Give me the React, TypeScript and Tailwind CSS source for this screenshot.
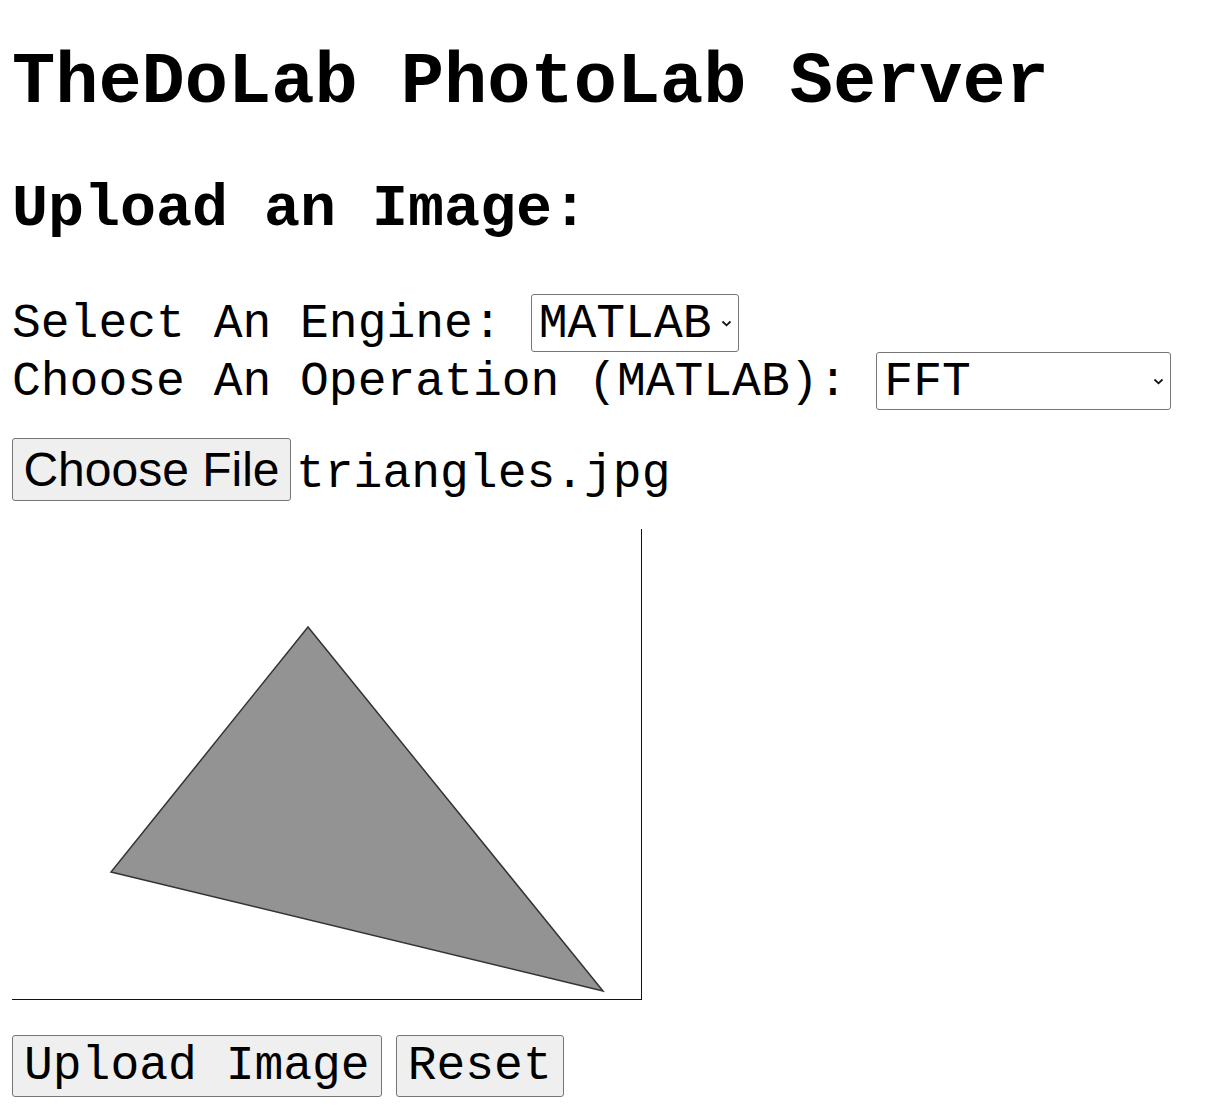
import React from "react";

function Chevron() {
  return (
    <svg width="11" height="7" viewBox="0 0 11 7" className="shrink-0">
      <path d="M1.5 1.5 L5.5 5.3 L9.5 1.5" fill="none" stroke="#111" strokeWidth="1.8" />
    </svg>
  );
}

function FakeSelect({ value, width }: { value: string; width: string }) {
  return (
    <div
      className={`${width} h-[58px] ml-[29px] flex items-center justify-between border border-[#767676] rounded-[3px] bg-white pl-[7px] pr-[6px]`}
    >
      <span className="text-[48px] leading-[48px] pt-[1px]">{value}</span>
      <Chevron />
    </div>
  );
}

function Preview() {
  // the uploaded jpg, a grey triangle with a dark edge right and bottom
  return (
    <svg width="630" height="471" viewBox="0 0 630 471" className="block">
      <rect x="0" y="0" width="630" height="471" fill="#ffffff" />
      <polygon points="296,98 99,343 591,462" fill="#939393" stroke="#333" strokeWidth="1.5" strokeLinejoin="miter" />
      <line x1="629.5" y1="0" x2="629.5" y2="471" stroke="#111" strokeWidth="1" />
      <line x1="0" y1="470.5" x2="630" y2="470.5" stroke="#111" strokeWidth="1" />
    </svg>
  );
}

export default function App() {
  return (
    <div className="min-h-[1120px] bg-white text-black pl-[12px] pt-[1px] font-['Liberation_Mono','Courier_New',monospace]">
      <h1 className="mt-[46px] text-[72px] leading-[72px] font-bold">TheDoLab PhotoLab Server</h1>
      <h2 className="mt-[60px] text-[60px] leading-[60px] font-bold">Upload an Image:</h2>

      <div className="mt-[55px] flex items-start h-[58px]">
        <span className="text-[48px] leading-[48px] pt-[6px] whitespace-pre">Select An Engine:</span>
        <FakeSelect value="MATLAB" width="w-[208px]" />
      </div>
      <div className="flex items-start h-[58px]">
        <span className="text-[48px] leading-[48px] pt-[6px] whitespace-pre">Choose An Operation (MATLAB):</span>
        <FakeSelect value="FFT" width="w-[295px]" />
      </div>

      <div className="mt-[28px] flex items-center">
        <button
          type="button"
          className="h-[63px] w-[279px] flex items-center justify-center border border-[#767676] rounded-[3px] bg-[#efefef] font-['Liberation_Sans',Arial,sans-serif] text-[48px] leading-[48px] pt-[1px]"
        >
          Choose File
        </button>
        <span className="ml-[5px] text-[48px] leading-[48px] pt-[8px]">triangles.jpg</span>
      </div>

      <div className="mt-[28px]">
        <Preview />
      </div>

      <div className="mt-[35px] flex gap-[14px]">
        <button
          type="button"
          className="h-[62px] px-[11px] flex items-center border border-[#767676] rounded-[3px] bg-[#efefef] text-[48px] leading-[48px]"
        >
          Upload Image
        </button>
        <button
          type="button"
          className="h-[62px] px-[11px] flex items-center border border-[#767676] rounded-[3px] bg-[#efefef] text-[48px] leading-[48px]"
        >
          Reset
        </button>
      </div>
    </div>
  );
}
